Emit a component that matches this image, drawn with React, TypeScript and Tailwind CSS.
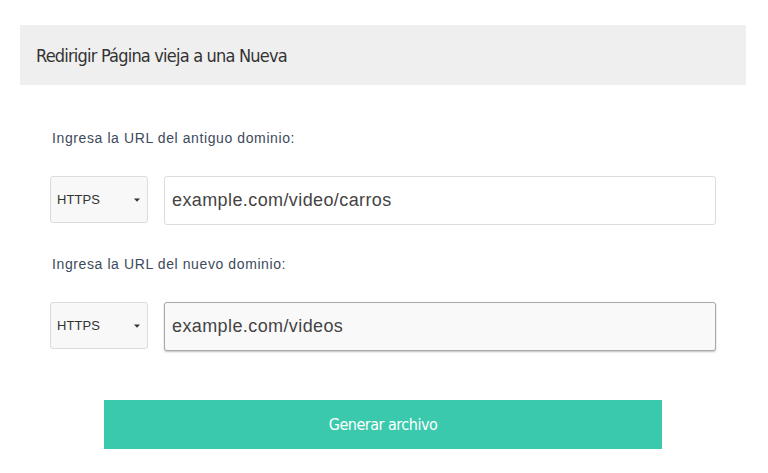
import { useState } from "react";

/* ─── small pieces ───────────────────────────────── */
function ProtocolSelect({ value }: { value: string }) {
  return (
    <div className="relative w-[98px] h-[47px] flex-shrink-0 rounded-[3px] border border-[#dcdcdc] bg-[#f8f8f8] flex items-center pl-[6px]">
      <span className="text-[13px] tracking-[0.1px] text-[#333] font-['Liberation_Sans',Arial,sans-serif]">{value}</span>
      <svg className="absolute left-[83px] top-[21px]" width="6" height="4" viewBox="0 0 6 4">
        <path d="M0 0.5h6L3 3.8z" fill="#333" />
      </svg>
    </div>
  );
}

function UrlRow({ label, proto, url, focused }: { label: string; proto: string; url: string; focused?: boolean }) {
  const [val, setVal] = useState(url);
  return (
    <div className="flex flex-col">
      <p className="pl-[32px] text-[14px] leading-[16px] tracking-[0.6px] text-[#3d4a5c] font-['Liberation_Sans',Arial,sans-serif]">
        {label}
      </p>
      <div className="flex items-start pl-[30px] mt-[30px] gap-[16px]">
        <ProtocolSelect value={proto} />
        <input
          value={val}
          onChange={(e) => setVal(e.target.value)}
          className={
            focused
              ? "w-[552px] h-[49px] rounded-[3px] border border-[#a9a9a9] bg-[#f9f9f9] shadow-[0_1px_2px_rgba(0,0,0,0.25)] px-[7px] text-[18px] tracking-[0.4px] text-[#444] outline-none font-['Liberation_Sans',Arial,sans-serif]"
              : "w-[552px] h-[49px] rounded-[3px] border border-[#dcdcdc] bg-white px-[7px] text-[18px] tracking-[0.4px] text-[#444] outline-none font-['Liberation_Sans',Arial,sans-serif]"
          }
        />
      </div>
    </div>
  );
}

/* ─── page ───────────────────────────────────────── */
export default function App() {
  return (
    <div className="w-[768px] h-[473px] bg-white overflow-hidden pt-[25px] pl-[20px]">
      <div className="w-[726px] h-[60px] bg-[#efefef] flex items-center pl-[16px]">
        <h1 className="text-[18px] tracking-[-0.8px] text-[#333] font-['DejaVu_Sans_Condensed',sans-serif]">
          Redirigir Página vieja a una Nueva
        </h1>
      </div>

      <div className="flex flex-col mt-[45px]">
        <UrlRow label="Ingresa la URL del antiguo dominio:" proto="HTTPS" url="example.com/video/carros" />
        <div className="h-[31px]" />
        <UrlRow label="Ingresa la URL del nuevo dominio:" proto="HTTPS" url="example.com/videos" focused />
      </div>

      <div className="mt-[49px] pl-[84px]">
        <button className="w-[558px] h-[49px] bg-[#3ac9ad] text-white text-[16px] tracking-[-0.5px] font-['DejaVu_Sans_Condensed',sans-serif]">
          Generar archivo
        </button>
      </div>
    </div>
  );
}
